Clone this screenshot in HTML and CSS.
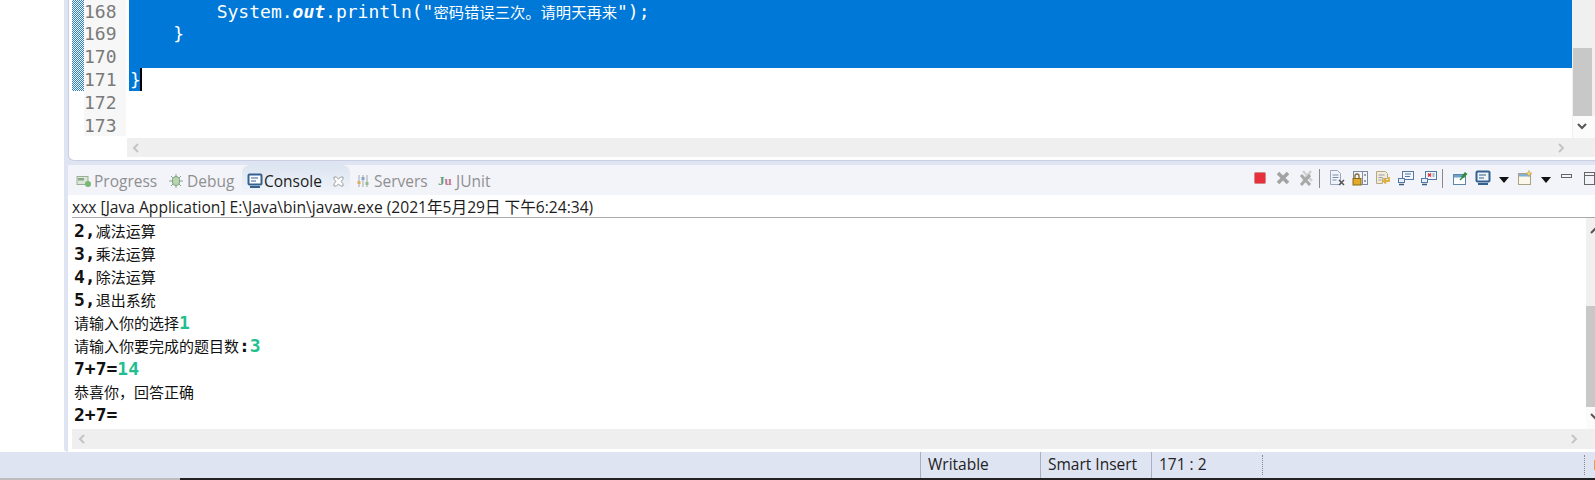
FILE: index.html
```html
<!DOCTYPE html>
<html lang="zh">
<head>
<meta charset="utf-8">
<title>Eclipse Console</title>
<link rel="stylesheet" href="styles.css">
</head>
<body>
<div class="window">
  <div class="main">
    <aside class="leftblank"></aside>
    <div class="workbench">
      <section class="editor">
        <div class="editor-body">
          <div class="annot"><div class="annot-fill"></div></div>
          <div class="gutter">
            <div class="ln first">168</div><div class="ln">169</div><div class="ln">170</div><div class="ln">171</div><div class="ln">172</div><div class="ln">173</div>
          </div>
          <div class="code">
            <div class="cl first sel">        System.<b class="it">out</b>.println("<span class="cn code-cn">密码错误三次。请明天再来</span>");</div>
            <div class="cl sel">    }</div>
            <div class="cl sel"></div>
            <div class="cl last"><span class="selpart">}</span><span class="caret"></span></div>
            <div class="cl"></div>
            <div class="cl"></div>
          </div>
          <div class="vbar editor-vbar">
            <div class="vthumb editor-thumb"></div>
            <div class="vend">
              <svg class="chev" width="14" height="10" viewBox="0 0 14 10"><path d="M3 2l4 4 4-4" fill="none" stroke="#555" stroke-width="2"/></svg>
            </div>
          </div>
        </div>
        <div class="editor-hbar">
          <div class="hbar-spacer"></div>
          <div class="hbar editor-hscroll">
            <svg width="10" height="12" viewBox="0 0 10 12"><path d="M7 2L3 6l4 4" fill="none" stroke="#c4c4c4" stroke-width="2"/></svg>
            <svg width="10" height="12" viewBox="0 0 10 12"><path d="M3 2l4 4-4 4" fill="none" stroke="#c4c4c4" stroke-width="2"/></svg>
          </div>
        </div>
      </section>
      <section class="view">
        <div class="tabs">
          <div class="tab t-progress">
            <svg class="ic" width="16" height="16" viewBox="0 0 16 16"><rect x="1" y="3.500" width="11" height="8" fill="#dbe6d8" stroke="#9ab09a"/><rect x="2" y="5" width="6" height="2.500" fill="#8aa88a"/><circle cx="12" cy="11" r="3" fill="#74b872"/></svg>
            <span>Progress</span>
          </div>
          <div class="tab t-debug">
            <svg class="ic" width="16" height="16" viewBox="0 0 16 16"><g stroke="#8aa58a" stroke-width="1"><path d="M8 1v14M1 8h14M3 3l10 10M13 3L3 13"/></g><ellipse cx="8" cy="8" rx="3.600" ry="4.400" fill="#b5d6b0" stroke="#7d9d7d"/></svg>
            <span>Debug</span>
          </div>
          <div class="tab active">
            <svg class="ic" width="16" height="16" viewBox="0 0 16 16"><rect x="1.500" y="1.500" width="13" height="10" rx="1" fill="#fff" stroke="#34618f" stroke-width="2"/><path d="M4 5h7M4 8h5" stroke="#34618f"/><path d="M3 14h10" stroke="#34618f" stroke-width="2"/></svg>
            <span>Console</span>
            <svg class="close" width="11" height="11" viewBox="0 0 11 11"><path d="M1 1h2.500l2 2.200 2-2.200H10v2.500L7.800 5.500 10 7.500V10H7.500l-2-2.200-2 2.200H1V7.500l2.200-2L1 3.500z" fill="#fff" stroke="#8b8b8b" stroke-width=".8"/></svg>
          </div>
          <div class="tab t-servers">
            <svg class="ic" width="16" height="16" viewBox="0 0 16 16"><path d="M4 2v12M8 2v12M12 2v12" stroke="#a8a8a8"/><rect x="2.500" y="8" width="3" height="3" fill="#d8b060"/><rect x="6.500" y="4" width="3" height="3" fill="#7fa8cf"/><rect x="10.500" y="9" width="3" height="3" fill="#8fbc8a"/></svg>
            <span>Servers</span>
          </div>
          <div class="tab t-junit">
            <span class="ju"><span class="ju-j">J</span><span class="ju-u">u</span></span>
            <span>JUnit</span>
          </div>
          <div class="toolbar">
            <svg class="tool" width="16" height="16" viewBox="0 0 16 16"><rect x="2.500" y="2.500" width="11" height="11" rx="1" fill="#e8303a" stroke="#d08a8e"/></svg>
            <svg class="tool" width="16" height="16" viewBox="0 0 16 16"><path d="M3 3l10 10M13 3L3 13" stroke="#a3a3a3" stroke-width="3.600"/></svg>
            <svg class="tool" width="16" height="16" viewBox="0 0 16 16"><path d="M5 1l9 10M13 1L5 11" stroke="#d0d0d0" stroke-width="2.500"/><path d="M3 5l9 10M12 5L3 15" stroke="#a8a8a8" stroke-width="3"/></svg>
            <i class="sep"></i>
            <svg class="tool" width="16" height="16" viewBox="0 0 16 16"><path d="M1.500.5h7l3 3v11h-10z" fill="#f1f3fa" stroke="#9aa6bd"/><path d="M3.500 5h6M3.500 7.500h6M3.500 10h4" stroke="#7f8ca5"/><path d="M10 10l5 5M15 10l-5 5" stroke="#555" stroke-width="1.500"/></svg>
            <svg class="tool" width="16" height="16" viewBox="0 0 16 16"><rect x="1.500" y="1.500" width="14" height="13" fill="#f4f4f4" stroke="#7d8aa3"/><path d="M10.500 1.500v13" stroke="#7d8aa3"/><path d="M13 4v2M13 10v2" stroke="#3a4c6c"/><rect x="1" y="8.500" width="8" height="6.500" fill="#e2a92a" stroke="#8b6a1a"/><path d="M3 8V6a2 2 0 014 0v2" fill="none" stroke="#7d6a3a" stroke-width="1.300"/></svg>
            <svg class="tool" width="16" height="16" viewBox="0 0 16 16"><path d="M1.500 1.500h9l2 2v5h-5v5h-6z" fill="#f1ecd9" stroke="#b3aa83"/><path d="M3.500 5h6M3.500 7.500h4M3.500 10h3" stroke="#9a9bb0"/><path d="M14 7v4h-5M11 8.500L8.500 11l2.500 2.500" fill="none" stroke="#e0b03c" stroke-width="1.800"/></svg>
            <svg class="tool" width="16" height="16" viewBox="0 0 16 16"><rect x="4.500" y="1.500" width="11" height="8" fill="#f3f6fb" stroke="#547aa3"/><path d="M7 4h6M7 6.500h5" stroke="#547aa3"/><rect x=".5" y="8.500" width="6" height="4" fill="#e9eef6" stroke="#547aa3"/><path d="M1 14.500h5" stroke="#3b5a80" stroke-width="1.500"/></svg>
            <svg class="tool" width="16" height="16" viewBox="0 0 16 16"><rect x="4.500" y="1.500" width="11" height="8" fill="#f3f6fb" stroke="#547aa3"/><path d="M7 3.500l3 3M10 3.500l-3 3" stroke="#d9333a" stroke-width="1.500"/><path d="M11.500 4h2M11.500 6h2" stroke="#547aa3"/><rect x=".5" y="8.500" width="6" height="4" fill="#e9eef6" stroke="#547aa3"/><path d="M1 14.500h5" stroke="#3b5a80" stroke-width="1.500"/></svg>
            <i class="sep"></i>
            <svg class="tool" width="16" height="16" viewBox="0 0 16 16"><rect x="1.500" y="4.500" width="12" height="10" fill="#fff" stroke="#5c86a8"/><rect x="2" y="5" width="11" height="2.500" fill="#6ea0c8"/><path d="M9 7l4-5 2.500 2-4 4z" fill="#2f8c3c"/><path d="M8 10l3-3" stroke="#2f8c3c" stroke-width="1.500"/></svg>
            <svg class="tool" width="16" height="16" viewBox="0 0 16 16"><rect x="1.500" y="1.500" width="13" height="10" rx="1" fill="#eef3f8" stroke="#34618f" stroke-width="2"/><path d="M4 5h7M4 8h5" stroke="#34618f"/><path d="M3 14h10" stroke="#34618f" stroke-width="2"/></svg>
            <svg class="caret-down" width="10" height="6" viewBox="0 0 10 6"><path d="M0 0h10L5 6z" fill="#111"/></svg>
            <svg class="tool" width="16" height="16" viewBox="0 0 16 16"><rect x="1.500" y="3.500" width="12" height="11" fill="#fbf8ea" stroke="#a9a184"/><rect x="2" y="4" width="11" height="2.500" fill="#7fb0d6"/><path d="M12 .5l1 2 2 1-2 1-1 2-1-2-2-1 2-1z" fill="#f2d27a" stroke="#c2a04a" stroke-width=".6"/></svg>
            <svg class="caret-down" width="10" height="6" viewBox="0 0 10 6"><path d="M0 0h10L5 6z" fill="#111"/></svg>
            <svg class="tool" width="16" height="16" viewBox="0 0 16 16"><rect x="2.500" y="4.500" width="10" height="3" fill="none" stroke="#666"/></svg>
            <svg class="tool" width="16" height="16" viewBox="0 0 16 16"><rect x="2.500" y="2.500" width="10" height="12" fill="none" stroke="#666"/><path d="M2.500 5.500h10" stroke="#666"/></svg>
          </div>
        </div>
        <div class="proc">xxx [Java Application] E:\Java\bin\javaw.exe (2021年5月29日 下午6:24:34)</div>
        <div class="console-body">
          <div class="console">
            <div class="out">2,<span class="cn">减法运算</span></div>
            <div class="out">3,<span class="cn">乘法运算</span></div>
            <div class="out">4,<span class="cn">除法运算</span></div>
            <div class="out">5,<span class="cn">退出系统</span></div>
            <div class="out"><span class="cn">请输入你的选择</span><span class="in">1</span></div>
            <div class="out"><span class="cn">请输入你要完成的题目数</span>:<span class="in">3</span></div>
            <div class="out">7+7=<span class="in">14</span></div>
            <div class="out"><span class="cn">恭喜你，回答正确</span></div>
            <div class="out">2+7=</div>
          </div>
          <div class="vbar console-vbar">
            <svg class="chev-up" width="14" height="10" viewBox="0 0 14 10"><path d="M3 7l4-4 4 4" fill="none" stroke="#555" stroke-width="2"/></svg>
            <div class="vthumb console-thumb"></div>
            <div class="vend">
              <svg class="chev-down" width="14" height="10" viewBox="0 0 14 10"><path d="M3 2l4 4 4-4" fill="none" stroke="#555" stroke-width="2"/></svg>
            </div>
          </div>
        </div>
        <div class="hbar console-hbar">
          <svg width="10" height="12" viewBox="0 0 10 12"><path d="M7 2L3 6l4 4" fill="none" stroke="#c4c4c4" stroke-width="2"/></svg>
          <svg width="10" height="12" viewBox="0 0 10 12"><path d="M3 2l4 4-4 4" fill="none" stroke="#c4c4c4" stroke-width="2"/></svg>
        </div>
      </section>
    </div>
  </div>
  <footer class="status">
    <div class="cell cell-w">Writable</div>
    <div class="cell cell-s">Smart Insert</div>
    <div class="cell cell-p">171 : 2</div>
    <i class="dots"></i>
    <i class="dots dots2"></i>
    <i class="orange"></i>
  </footer>
  <div class="taskstrip"><div class="task-a"></div><div class="task-b"></div></div>
</div>
</body>
</html>
```
FILE: styles.css
```css
* { box-sizing: border-box; }
html, body { margin: 0; padding: 0; }
body { width: 1595px; height: 480px; overflow: hidden; background: #fff; }
.window { width: 1595px; height: 480px; display: flex; flex-direction: column; font-family: "Open Sans", "Noto Sans CJK SC", sans-serif; }
.main { flex: 0 0 452px; display: flex; min-height: 0; }
.leftblank { flex: 0 0 64px; background: #fff; }
.workbench { flex: 1; min-width: 0; background: #dfe4f3; display: flex; flex-direction: column; padding-left: 4px; border-radius: 0 0 0 4px; }

.editor { height: 161px; background: #fff; border: 1px solid #c9cee2; border-top: 0; border-right: 0; border-radius: 0 0 0 6px; display: flex; flex-direction: column; overflow: hidden; padding: 0 0 3px 3px; }
.editor-body { height: 138px; display: flex; }
.annot { flex: 0 0 12px; }
.annot-fill { height: 91px; background-color: #6aa6d6; background-image: repeating-conic-gradient(#2f7fc0 0 25%, #f2f7fb 0 50%); background-size: 2px 2px; }
.gutter { flex: 0 0 42px; height: 136px; overflow: hidden; background: #f7f7f7; color: #7a7a7a; font: 18px/23px "DejaVu Sans Mono", monospace; }
.ln { height: 23px; }
.ln.first, .cl.first { height: 22px; }
.code { flex: 1; margin-left: 3px; font: 18px/23px "DejaVu Sans Mono", "Noto Sans CJK SC", monospace; color: #fff; min-width: 0; }
.cl { height: 23px; white-space: pre; padding-left: 1px; display: flex; }
.cl.last { padding-left: 0; }
.cl.sel { background: #0078d7; }
.it { font-style: italic; font-weight: bold; }
.cn { font: 400 15px/23px "Noto Sans CJK SC", sans-serif; }
.code-cn { font-size: 15.300px; }
.selpart { background: #0078d7; width: 11px; padding-left: 1px; }
.caret { width: 2px; background: #000; }
.vbar { background: #f0f0f0; display: flex; flex-direction: column; overflow: hidden; }
.editor-vbar { flex: 0 0 23px; padding: 48px 0 0 1px; }
.vthumb { background: #c8c8c8; flex: none; width: 19px; }
.editor-thumb { height: 68px; }
.vend { flex: 1; background: #fbfbfb; }
.chev { margin: 6px 0 0 2px; display: block; }
.editor-hbar { height: 19px; display: flex; }
.hbar-spacer { flex: 0 0 55px; }
.hbar { flex: 1; background: #efefef; display: flex; justify-content: space-between; align-items: center; }
.editor-hscroll { padding: 0 29px 0 4px; }

.view { margin-top: 4px; flex: 1; display: flex; flex-direction: column; min-height: 0; background: #fff; padding-left: 4px; }
.tabs { flex: none; height: 30px; background: #f3f4fa; display: flex; align-items: center; margin-left: -4px; padding-left: 8px; font-size: 15.500px; color: #8f8f8f; white-space: nowrap; }
.tab { height: 30px; display: flex; align-items: center; gap: 2px; flex: none; padding-top: 2px; }
.t-progress { width: 92px; }
.t-debug { width: 74px; gap: 3px; }
.tab.active { width: 108px; background: linear-gradient(#dce5f1, #f3f5fb); color: #1c1c1c; border-radius: 8px 8px 0 0; padding-left: 5px; gap: 1px; margin-right: 5px; }
.t-servers { width: 83px; gap: 3px; }
.t-junit { gap: 3px; }
.ic { flex: none; }
.close { margin-left: 10px; flex: none; }
.ju { width: 15px; font: bold 13px "Liberation Serif", serif; }
.ju-j { color: #5f9f7f; }
.ju-u { color: #c27a8a; }
.toolbar { margin: -4px -3px 0 auto; display: flex; align-items: center; gap: 7px; }
.tool { flex: none; }
.sep { width: 1px; height: 19px; background: #8a8a8a; margin: 0 2px 0 -2px; flex: none; }
.caret-down { flex: none; margin: 4px 1px 0 1px; }

.proc { flex: none; height: 23px; border-bottom: 1px solid #a9a9a9; font-size: 15.600px; line-height: 24px; color: #1c1c1c; white-space: nowrap; }
.console-body { flex: none; height: 211px; display: flex; }
.console { flex: 1; padding: 1px 0 0 2px; font: bold 18px/23px "DejaVu Sans Mono", "Noto Sans CJK SC", monospace; color: #111; min-width: 0; }
.out { height: 23px; white-space: nowrap; }
.in { color: #1fbf8f; }
.console-vbar { flex: 0 0 9px; }
.chev-up { flex: none; margin: 8px 0 0 2px; display: block; }
.console-thumb { height: 101px; margin-top: 70px; }
.chev-down { margin: 5px 0 0 2px; display: block; }
.console-hbar { flex: 0 0 20px; padding: 0 16px 0 5px; }

.status { flex: none; height: 26px; background: #dfe4f3; display: flex; align-items: center; font-size: 15.500px; color: #222; padding-left: 920px; overflow: hidden; }
.cell { flex: none; height: 26px; line-height: 25px; border-left: 1px solid #aab0c2; padding-left: 7px; white-space: nowrap; }
.cell-w { width: 120px; }
.cell-s { width: 111px; }
.cell-p { width: 111px; }
.dots { flex: none; width: 1px; height: 20px; border-left: 1px dotted #888; }
.dots2 { margin-left: 321px; }
.orange { flex: none; width: 2px; height: 10px; margin-left: 9px; background: #e8a04a; }
.taskstrip { flex: none; height: 2px; display: flex; }
.task-a { width: 180px; background: #bdbdbd; }
.task-b { flex: 1; background: #222; }
```
